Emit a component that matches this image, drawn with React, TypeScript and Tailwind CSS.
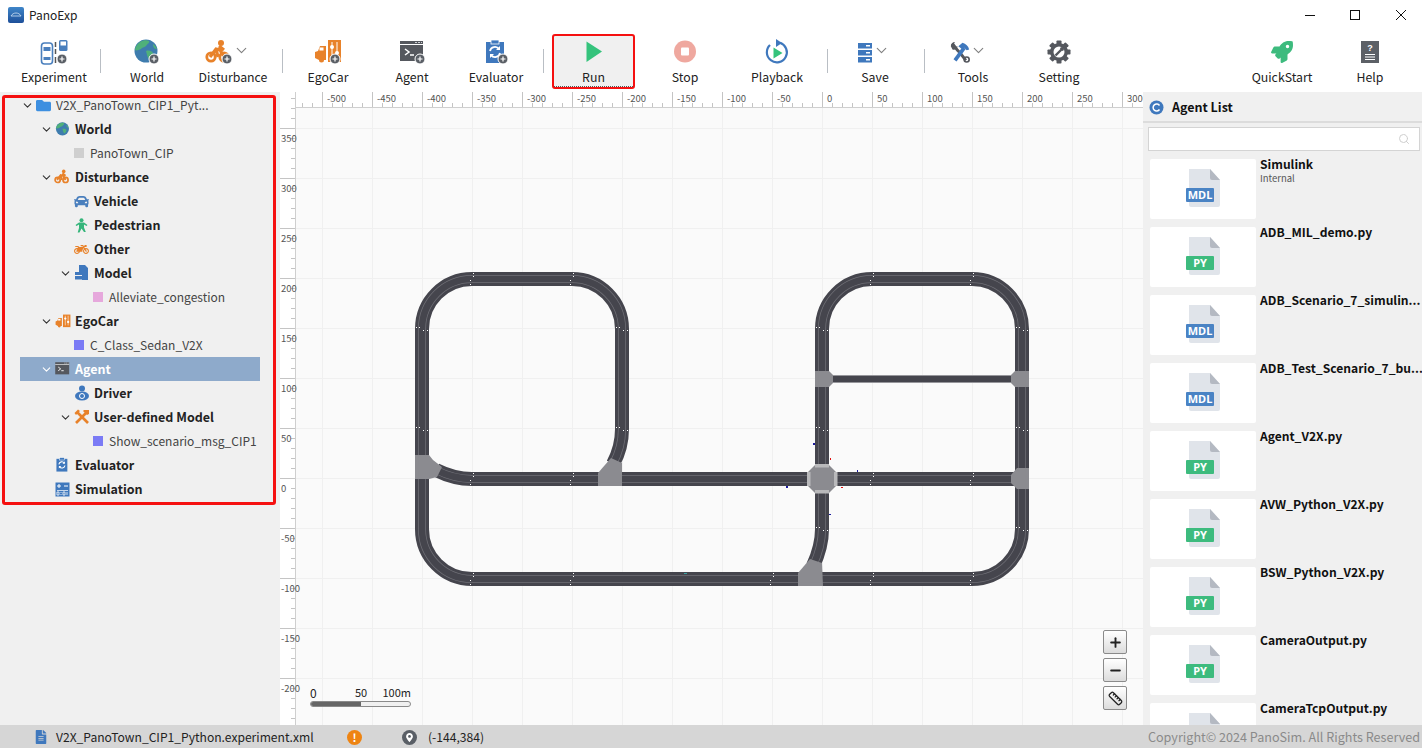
import React from "react";
import { ChevronDown, Search, Plus, Minus, Ruler } from "lucide-react";
import { FaRocket, FaCar, FaMotorcycle, FaFolder, FaFileAlt, FaMapMarkerAlt } from "react-icons/fa";

const Badge = ({ x, y }: { x: number; y: number }) => (
  <g>
    <circle cx={x} cy={y} r={5} fill="#5a5f66" stroke="#fff" strokeWidth={1} />
    <path d={`M${x - 2.5} ${y}H${x + 2.5}M${x} ${y - 2.5}V${y + 2.5}`} stroke="#fff" strokeWidth={1.2} />
  </g>
);

const Sv = ({ w = 28, h = 26, vb = "0 0 28 26", children }: { w?: number; h?: number; vb?: string; children: React.ReactNode }) => (
  <svg width={w} height={h} viewBox={vb} className="shrink-0">{children}</svg>
);

const ExperimentIcon = () => (
  <Sv>
    <rect x="1.5" y="4" width="11" height="21" rx="3" fill="#fff" stroke="#4a7fbd" strokeWidth="1.6" />
    <rect x="3.5" y="8" width="7" height="4" fill="#4a7fbd" />
    <rect x="3.5" y="18" width="7" height="3" fill="#4a7fbd" />
    <path d="M15.5 3v5M15.5 10v5M15.5 18v6" stroke="#555" strokeWidth="1.5" />
    <rect x="19" y="1" width="8.5" height="11" rx="1.5" fill="#4a7fbd" />
    <rect x="20.5" y="2.5" width="5.5" height="4" fill="#fff" />
    <Badge x={22} y={20} />
  </Sv>
);

const WorldIcon = ({ s = 28, badge = true }: { s?: number; badge?: boolean }) => (
  <Sv w={s} h={(s * 26) / 28}>
    <circle cx="13" cy="12" r="11.5" fill="#3e7cae" />
    <path d="M7 3c3-2 7-2 9-1 1 2-2 3-3 5-2 2-4 1-5 3-2 1-5 2-6 1 0-3 2-6 5-8zM13 12c3-1 6 0 7 2 0 3-2 5-4 6-2-2-2-5-3-8zM20 5c2 1 3 3 4 5-2 0-4-1-4-5z" fill="#4fb07a" />
    {badge && <Badge x={21} y={20} />}
  </Sv>
);

const CyclistIcon = ({ s = 28, badge = true }: { s?: number; badge?: boolean }) => (
  <Sv w={s} h={(s * 26) / 28}>
    <circle cx="6" cy="18" r="4.2" fill="none" stroke="#e8822a" strokeWidth="2.8" />
    <circle cx="19" cy="18" r="4.2" fill="none" stroke="#e8822a" strokeWidth="2.8" />
    <circle cx="16" cy="4" r="3" fill="#e8822a" />
    <path d="M5 18l6-8 4 1 4 7M11 10l2 8M14 7l5 4" fill="none" stroke="#e8822a" strokeWidth="3.2" />
    {badge && <Badge x={22} y={20} />}
  </Sv>
);

const EgoIcon = ({ s = 28, badge = true }: { s?: number; badge?: boolean }) => (
  <Sv w={s} h={(s * 26) / 28}>
    <path d="M1 19v-6l3-1 2-5h6v14h-2a2.5 2.5 0 0 1-5 0z" fill="#e8822a" />
    <rect x="5.5" y="8.5" width="4" height="3" fill="#fff" />
    <rect x="14" y="1" width="13" height="22" fill="#e8822a" />
    <path d="M18 3v17M23 3v17" stroke="#fff" strokeWidth="1" />
    <circle cx="18" cy="8" r="2" fill="#fff" />
    <circle cx="23" cy="14" r="2" fill="#fff" />
    {badge && <Badge x={21} y={20} />}
  </Sv>
);

const AgentIcon = ({ s = 28, badge = true }: { s?: number; badge?: boolean }) => (
  <Sv w={s} h={(s * 26) / 28}>
    <rect x="2" y="2" width="23" height="20" fill="#55585e" />
    <rect x="2" y="5" width="23" height="1" fill="#fff" />
    <path d="M17 3.5h2M20 3.5h2M23 3.5h1" stroke="#cfd2d6" strokeWidth="1.2" />
    <path d="M7 10l4 3-4 3M12 16h4" fill="none" stroke="#fff" strokeWidth="1.5" />
    {badge && <Badge x={22} y={20} />}
  </Sv>
);

const EvalIcon = ({ s = 28, badge = true }: { s?: number; badge?: boolean }) => (
  <Sv w={s} h={(s * 26) / 28}>
    <rect x="4" y="3" width="18" height="21" fill="#3f78bd" />
    <rect x="9" y="1" width="8" height="4" fill="#3f78bd" stroke="#fff" strokeWidth="0.8" />
    <path d="M8 12a5 5 0 0 1 9-2M18 14a5 5 0 0 1-9 2" fill="none" stroke="#fff" strokeWidth="1.8" />
    <path d="M18 7v4h-4zM8 19v-4h4z" fill="#fff" />
    {badge && <Badge x={21} y={20} />}
  </Sv>
);

const RunIcon = () => (
  <Sv>
    <path d="M6.500 2.500L22 12.500L6.500 23z" fill="#35c37c" />
  </Sv>
);

const StopIcon = () => (
  <Sv>
    <circle cx="14" cy="12.500" r="11" fill="#efa89f" />
    <rect x="10" y="8.500" width="8" height="8" rx="1" fill="#fff" />
  </Sv>
);

const PlaybackIcon = () => (
  <Sv>
    <path d="M17 3.800A10 10 0 1 1 7 6" fill="none" stroke="#3f78bd" strokeWidth="2.200" />
    <path d="M13 0l6 4-6 4z" fill="#3f78bd" />
    <path d="M10.500 8.500l9 5.500-9 5.500z" fill="#35c37c" />
  </Sv>
);

const SaveIcon = () => (
  <Sv w={16} h={24} vb="0 0 16 24">
    {[3, 10, 17].map((y) => (
      <g key={y}>
        <rect x="1" y={y} width="14" height="5.500" fill="#3f78bd" />
        <rect x="9" y={y + 2} width="4" height="1.500" fill="#fff" />
      </g>
    ))}
  </Sv>
);

const ToolsIcon = () => (
  <Sv w={20} h={24} vb="0 0 24 26">
    <path d="M3 3l6 8 3 3 7 9" fill="none" stroke="#55585e" strokeWidth="3.500" />
    <path d="M1 6c0-3 2-5 5-5L4 4l2 3 3-1c0 3-3 5-6 4z" fill="#55585e" />
    <path d="M6 23L17 8" stroke="#3f78bd" strokeWidth="4.500" />
    <path d="M10 6l5-4c4 1 7 4 8 8l-3 1-3-3-2 2z" fill="#3f78bd" />
    <circle cx="20" cy="22" r="3" fill="none" stroke="#55585e" strokeWidth="2" />
  </Sv>
);

const GearIcon = () => (
  <Sv w={24} h={24} vb="0 0 24 24">
    <g fill="#55585e">
      {[0, 45, 90, 135, 180, 225, 270, 315].map((a) => (
        <rect key={a} x="9.500" y="0.500" width="5" height="5" rx="0.800" transform={`rotate(${a} 12 12)`} />
      ))}
      <circle cx="12" cy="12" r="9" />
    </g>
    <circle cx="12" cy="12" r="5.500" fill="#fff" />
    <path d="M8.500 15.500L14 10" stroke="#55585e" strokeWidth="2.400" />
    <circle cx="15" cy="9" r="2" fill="#55585e" />
  </Sv>
);

const HelpIcon = () => (
  <Sv w={20} h={24} vb="0 0 20 24">
    <rect x="1" y="1" width="18" height="22" fill="#5c6066" />
    <text x="10" y="11" textAnchor="middle" fontSize="9" fontWeight="700" fill="#fff" fontFamily="'Liberation Sans',sans-serif">?</text>
    <path d="M5 14.500h10M5 17h10M5 19.500h10" stroke="#fff" strokeWidth="1.200" />
  </Sv>
);

const SimIcon = () => (
  <Sv w={15} h={15} vb="0 0 15 15">
    <rect x="0.500" y="0.500" width="14" height="14" fill="#3f78bd" />
    <path d="M2 4h4M4 2v4M9 4h4" stroke="#fff" strokeWidth="1" />
    <path d="M2 8.500h11" stroke="#fff" strokeWidth="0.700" />
    <path d="M2 10h2v3H2zM6 10v1M6 12v1M8 10h2v3H8zM12 10v3" fill="none" stroke="#fff" strokeWidth="0.800" />
  </Sv>
);

const ModelIcon = () => (
  <Sv w={15} h={16} vb="0 0 15 16">
    <path d="M5 0h6l3 3v12H8V7H5z" fill="#3f78bd" />
    <rect x="1" y="7" width="10" height="3" fill="#3f78bd" />
    <rect x="1" y="11" width="10" height="3.500" fill="#3f78bd" />
  </Sv>
);

const DriverIcon = () => (
  <Sv w={16} h={16} vb="0 0 16 16">
    <circle cx="8" cy="3.500" r="3" fill="#3f78bd" />
    <ellipse cx="8" cy="11" rx="7" ry="4.500" fill="#3f78bd" />
    <circle cx="8" cy="11" r="2.500" fill="none" stroke="#fff" strokeWidth="1" />
  </Sv>
);

const PedIcon = () => (
  <Sv w={15} h={15} vb="0 0 15 15">
    <circle cx="7.500" cy="2.200" r="2" fill="#35b57a" />
    <path d="M1.500 7l3.500-2.500h5L13.500 7l-1 1-2.500-1.500v3l1.800 4.500h-1.800L7.500 10.500 5.500 14.500H3.700L5 10V6.500L2.500 8z" fill="#35b57a" />
  </Sv>
);

const WrenchCross = () => (
  <Sv w={16} h={16} vb="0 0 16 16">
    <path d="M2 14L12 4" stroke="#e8822a" strokeWidth="2.600" />
    <path d="M10 1h5v4l-2 1-4-4z" fill="#e8822a" />
    <path d="M3 3l11 11" stroke="#e8822a" strokeWidth="2.600" />
    <path d="M0.500 4L4 0.500 6 2 2 6z" fill="#e8822a" />
  </Sv>
);

const Sq = ({ c }: { c: string }) => <span className="block w-[10px] h-[10px] mr-[6px] shrink-0" style={{ background: c }} />;

const I = ({ children }: { children: React.ReactNode }) => (
  <span className="w-[15px] h-[16px] mr-[5px] flex items-center justify-center shrink-0">{children}</span>
);

type TreeRow = { level: number; label: string; bold?: boolean; chev?: boolean; icon: React.ReactNode; sel?: boolean };

const rows: TreeRow[] = [
  { level: 0, label: "V2X_PanoTown_CIP1_Pyt...", chev: true, icon: <I><FaFolder size={15} color="#3d8fe0" /></I> },
  { level: 1, label: "World", bold: true, chev: true, icon: <I><WorldIcon s={16} badge={false} /></I> },
  { level: 2, label: "PanoTown_CIP", icon: <Sq c="#cfcfcf" /> },
  { level: 1, label: "Disturbance", bold: true, chev: true, icon: <I><CyclistIcon s={17} badge={false} /></I> },
  { level: 2, label: "Vehicle", bold: true, icon: <I><FaCar size={15} color="#4a7fbd" /></I> },
  { level: 2, label: "Pedestrian", bold: true, icon: <I><PedIcon /></I> },
  { level: 2, label: "Other", bold: true, icon: <I><FaMotorcycle size={15} color="#e8822a" /></I> },
  { level: 2, label: "Model", bold: true, chev: true, icon: <I><ModelIcon /></I> },
  { level: 3, label: "Alleviate_congestion", icon: <Sq c="#e6a8dc" /> },
  { level: 1, label: "EgoCar", bold: true, chev: true, icon: <I><EgoIcon s={16} badge={false} /></I> },
  { level: 2, label: "C_Class_Sedan_V2X", icon: <Sq c="#7b7bf5" /> },
  { level: 1, label: "Agent", bold: true, chev: true, sel: true, icon: <I><AgentIcon s={17} badge={false} /></I> },
  { level: 2, label: "Driver", bold: true, icon: <I><DriverIcon /></I> },
  { level: 2, label: "User-defined Model", bold: true, chev: true, icon: <I><WrenchCross /></I> },
  { level: 3, label: "Show_scenario_msg_CIP1", icon: <Sq c="#7b7bf5" /> },
  { level: 1, label: "Evaluator", bold: true, icon: <I><EvalIcon s={17} badge={false} /></I> },
  { level: 1, label: "Simulation", bold: true, icon: <I><SimIcon /></I> },
];

const Tree = () => (
  <aside className="relative w-[280px] shrink-0 bg-[#f0f0f0] pt-[1px]">
    {rows.map((r) => (
      <div
        key={r.label}
        className={`ml-[20px] w-[240px] h-[24px] flex items-center whitespace-nowrap ${r.sel ? "bg-[#8eaacb] text-white" : r.bold ? "text-[#222]" : "text-[#444]"} ${r.bold ? "font-bold text-[12.500px]" : "text-[12px]"}`}
        style={{ paddingLeft: 1 + 19 * r.level }}
      >
        <span className="w-[15px] flex items-center justify-start shrink-0">
          {r.chev && <ChevronDown size={13} strokeWidth={2} color={r.sel ? "#fff" : "#333"} />}
        </span>
        {r.icon}
        <span>{r.label}</span>
      </div>
    ))}
    <div className="absolute left-[2px] top-[3px] w-[274px] h-[410px] border-[3px] border-[#f51010] rounded-[3px]" />
  </aside>
);

const Tool = ({ label, icon, w, sel, chev, cls = "", shift = 0 }: { label: string; icon: React.ReactNode; w: number; sel?: boolean; chev?: boolean; cls?: string; shift?: number }) => (
  <div
    className={`h-[55px] flex flex-col items-center shrink-0 ${sel ? "border-2 border-[#f51010] rounded-[3px] bg-[#f0f0f0] pt-[3px]" : "pt-[5px]"} ${cls}`}
    style={{ width: w }}
  >
    <div className="h-[26px] flex items-center justify-center" style={{ transform: `translateX(${shift}px)` }}>
      {icon}
      {chev && <ChevronDown size={17} strokeWidth={1.600} color="#808080" className="-mt-[3px]" />}
    </div>
    <div className={`mt-[3px] h-[18px] leading-[18px] text-[12.300px] text-[#222] ${sel ? "border-b border-dotted border-[#555] w-full text-center h-[20px]" : ""}`}>{label}</div>
  </div>
);

const Sep = ({ ml = 0 }: { ml?: number }) => <div className="w-px h-[24px] bg-[#b9bec4] mt-[15px] shrink-0" style={{ marginLeft: ml }} />;

const Toolbar = () => (
  <div className="h-[62px] flex items-start pt-[4px] pl-[14px] bg-white shrink-0">
    <Tool label="Experiment" w={80} icon={<ExperimentIcon />} />
    <Sep ml={6} />
    <Tool label="World" w={92} icon={<WorldIcon />} />
    <Tool label="Disturbance" w={80} chev shift={-6} icon={<CyclistIcon />} />
    <Sep ml={9} />
    <Tool label="EgoCar" w={90} icon={<EgoIcon />} />
    <Tool label="Agent" w={78} icon={<AgentIcon />} />
    <Tool label="Evaluator" w={90} icon={<EvalIcon />} />
    <Sep ml={2} />
    <Tool label="Run" w={83} sel cls="ml-[8px]" icon={<RunIcon />} />
    <Tool label="Stop" w={100} icon={<StopIcon />} />
    <Tool label="Playback" w={84} icon={<PlaybackIcon />} />
    <Sep ml={8} />
    <Tool label="Save" w={94} chev shift={-2} icon={<SaveIcon />} />
    <Sep ml={2} />
    <Tool label="Tools" w={96} chev shift={-5} icon={<ToolsIcon />} />
    <Tool label="Setting" w={76} icon={<GearIcon />} />
    <div className="flex-1" />
    <Tool label="QuickStart" w={80} icon={<FaRocket size={22} color="#3dbb7e" />} />
    <Tool label="Help" w={96} cls="mr-[4px]" icon={<HelpIcon />} />
  </div>
);

const range = (a: number, b: number, s: number) => {
  const o: number[] = [];
  for (let v = a; v <= b; v += s) o.push(v);
  return o;
};
const X0 = 822;
const Y0 = 478;

const dotsH: [number, number][] = [];
[[279, [472, 572, 872, 972]], [479, [472, 572, 872, 972]], [579, [472, 572, 872, 972, 772]]].forEach(([y, xs]) => {
  (xs as number[]).forEach((x) => dotsH.push([x, y as number]));
});
const dotsV: [number, number][] = [];
[[422, [329, 429]], [622, [329, 429]], [822, [329, 429, 529]], [1022, [329, 429, 529]]].forEach(([x, ys]) => {
  (ys as number[]).forEach((y) => dotsV.push([x as number, y]));
});

const MAIN_ROADS = [
  "M422 460V329A50 50 0 0 1 472 279H572A50 50 0 0 1 622 329V429C622 442 619 453 613 464",
  "M422 475V529A50 50 0 0 0 472 579H972A50 50 0 0 0 1022 529V329A50 50 0 0 0 972 279H872A50 50 0 0 0 822 329V529C822 542 819 553 813 566",
  "M436 470C448 476 458 479 472 479H1022",
];

const Poly = ({ p, c = "#8b8b90" }: { p: string; c?: string }) => <polygon points={p} fill={c} />;

const MapSvg = () => (
  <svg width={863} height={633} viewBox="280 92 863 633" className="absolute inset-0">
    <rect x="280" y="92" width="863" height="633" fill="#fafafa" />
    {range(-500, 300, 50).map((v) => (
      <path key={v} d={`M${X0 + v + 0.5} 107V725`} stroke="#f0f0f0" strokeWidth="1" />
    ))}
    {range(-200, 350, 50).map((v) => (
      <path key={v} d={`M295 ${Y0 - v + 0.5}H1143`} stroke="#f0f0f0" strokeWidth="1" />
    ))}

    <g fill="none">
      {MAIN_ROADS.map((d) => <path key={d} d={d} stroke="#45454d" strokeWidth="14" />)}
      {MAIN_ROADS.map((d) => <path key={d} d={d} stroke="#6f6f76" strokeWidth="8" />)}
      {MAIN_ROADS.map((d) => <path key={d} d={d} stroke="#45454d" strokeWidth="6.500" />)}
      <path d="M822 379H1022" stroke="#96969b" strokeWidth="8" />
      <path d="M822 379H1022" stroke="#45454d" strokeWidth="6" />
    </g>

    <Poly p="415,455 429,455 433,460 442,467 437,477 429,479 415,479" />
    <Poly p="598,473 611,458 622,463 622,486 598,486" />
    <Poly p="810,559 822,563 823,586 798,586 798,573" />
    <Poly p="815,371 829,371 833,375 833,383 829,387 815,387" />
    <Poly p="1015,371 1029,371 1029,387 1015,387 1011,383 1011,375" />
    <Poly p="1017,468 1029,468 1029,489 1017,489 1011,483 1011,475" />
    <Poly p="815,465 829,465 836,472 836,486 829,493 815,493 808,486 808,472" />
    <g fill="#b9b9bb">
      <rect x="807" y="472" width="3.500" height="14" />
      <rect x="834" y="472" width="3.500" height="14" />
      <rect x="815" y="464" width="14" height="3.500" />
      <rect x="815" y="490" width="14" height="3.500" />
    </g>

    <g fill="#fff">
      {dotsH.map(([x, y]) => (
        <g key={`${x}-${y}`}>
          <rect x={x + 1} y={y - 6} width="1" height="1" />
          <rect x={x + 1} y={y - 3} width="1" height="1" />
          <rect x={x - 2} y={y + 1} width="1" height="1" />
          <rect x={x - 2} y={y + 5} width="1" height="1" />
        </g>
      ))}
      {dotsV.map(([x, y]) => (
        <g key={`${x}-${y}`}>
          <rect x={x - 6} y={y - 2} width="1" height="1" />
          <rect x={x - 3} y={y - 2} width="1" height="1" />
          <rect x={x + 1} y={y + 1} width="1" height="1" />
          <rect x={x + 5} y={y + 1} width="1" height="1" />
        </g>
      ))}
    </g>
    <rect x="813" y="443" width="2" height="2" fill="#1a1a9e" />
    <rect x="830" y="458" width="1" height="2" fill="#e01010" />
    <rect x="857" y="470" width="1" height="2" fill="#1a1a9e" />
    <rect x="786" y="486" width="2" height="2" fill="#1a1a9e" />
    <rect x="841" y="487" width="2" height="1" fill="#e01010" />
    <rect x="829" y="514" width="2" height="1" fill="#1a1a9e" />
    <rect x="684" y="573" width="3" height="1" fill="#3aa0a0" />

    <rect x="280" y="92" width="863" height="15" fill="#fff" />
    <rect x="280" y="92" width="15" height="633" fill="#fff" />
    <path d="M295 107.500H1143" stroke="#cfcfcf" />
    <path d="M295.500 92V725" stroke="#cfcfcf" />
    {range(-520, 310, 10).map((v) => (
      <path key={v} d={`M${X0 + v + 0.5} ${v % 50 === 0 ? 92 : 103}V107`} stroke="#c4c4c4" />
    ))}
    {range(-240, 380, 10).map((v) => (
      <path key={v} d={`M${v % 50 === 0 ? 280 : 291} ${Y0 - v + 0.5}H295`} stroke="#c4c4c4" />
    ))}
    <g fontSize="9.500" fill="#555" fontFamily="'Noto Sans CJK SC','Noto Sans',sans-serif">
      {range(-500, 300, 50).map((v) => (
        <text key={v} x={X0 + v + 5} y="102">{v}</text>
      ))}
      {range(-200, 350, 50).map((v) => (
        <text key={v} x="281" y={Y0 - v + 14}>{v}</text>
      ))}
    </g>
  </svg>
);

const ZoomBtn = ({ children }: { children: React.ReactNode }) => (
  <div className="w-[24px] h-[24px] rounded-[2px] border border-[#8a8a8a] bg-gradient-to-b from-white to-[#dcdcdc] flex items-center justify-center text-[#222]">{children}</div>
);

const Canvas = () => (
  <section className="relative flex-1 overflow-hidden">
    <MapSvg />
    <div className="absolute left-[823px] top-[538px] flex flex-col gap-[4px]">
      <ZoomBtn><Plus size={15} strokeWidth={3} /></ZoomBtn>
      <ZoomBtn><Minus size={15} strokeWidth={3} /></ZoomBtn>
      <ZoomBtn><Ruler size={15} strokeWidth={2} /></ZoomBtn>
    </div>
    <div className="absolute left-[30px] top-[592px] w-[101px]">
      <div className="relative h-[17px] text-[11px] text-[#222] leading-[17px]">
        <span className="absolute left-0 text-[12px]">0</span>
        <span className="absolute left-[45px]">50</span>
        <span className="absolute right-0">100m</span>
      </div>
      <div className="h-[6px] flex border border-[#8a8a8a] rounded-full overflow-hidden bg-[#f0f0f0]">
        <div className="w-1/2 bg-[#666]" />
      </div>
    </div>
  </section>
);

const FileIcon = ({ kind }: { kind: string }) => (
  <svg width="34" height="40" viewBox="0 0 34 40">
    <path d="M3 1h21l10 11v25a2 2 0 0 1-2 2H5a2 2 0 0 1-2-2z" fill="#e0e4ea" />
    <path d="M24 1l10 11h-8a2 2 0 0 1-2-2z" fill="#b4b9c2" />
    <rect x="0" y="20" width="28" height="14" rx="1" fill={kind === "MDL" ? "#4a83c4" : "#3dbb7e"} />
    <text x="14" y="31" textAnchor="middle" fontSize="11" fontWeight="700" fill="#fff" fontFamily="'Noto Sans',sans-serif">{kind}</text>
  </svg>
);

const agents: { name: string; kind: string; sub?: string }[] = [
  { name: "Simulink", kind: "MDL", sub: "Internal" },
  { name: "ADB_MIL_demo.py", kind: "PY" },
  { name: "ADB_Scenario_7_simulin...", kind: "MDL" },
  { name: "ADB_Test_Scenario_7_bu...", kind: "MDL" },
  { name: "Agent_V2X.py", kind: "PY" },
  { name: "AVW_Python_V2X.py", kind: "PY" },
  { name: "BSW_Python_V2X.py", kind: "PY" },
  { name: "CameraOutput.py", kind: "PY" },
  { name: "CameraTcpOutput.py", kind: "PY" },
];

const AgentPanel = () => (
  <aside className="w-[279px] shrink-0 bg-[#f0f0f0] flex flex-col overflow-hidden">
    <div className="h-[31px] shrink-0 border-b-2 border-[#dcdcdc] flex items-center pl-[6px] pt-[1px] gap-[8px]">
      <svg width="15" height="15" viewBox="0 0 15 15">
        <circle cx="7.500" cy="7.500" r="7" fill="#3f78bd" />
        <path d="M10.500 5.500a3.500 3.500 0 1 0 0 4" fill="none" stroke="#fff" strokeWidth="1.500" />
      </svg>
      <span className="font-bold text-[12.500px] text-[#111]">Agent List</span>
    </div>
    <div className="mt-[4px] ml-[5px] w-[272px] h-[24px] shrink-0 bg-white border border-[#d4d4d4] flex items-center justify-end pr-[9px]">
      <Search size={12} color="#cfcfcf" />
    </div>
    <div className="mt-[8px] ml-[7px] flex flex-col gap-[8px]">
      {agents.map((a) => (
        <div key={a.name} className="flex h-[60px] shrink-0">
          <div className="w-[106px] h-[60px] bg-white rounded-[2px] shrink-0 flex items-center justify-center pb-[2px]">
            <FileIcon kind={a.kind} />
          </div>
          <div className="ml-[4px] whitespace-nowrap">
            <div className="font-bold text-[12.100px] text-[#111] leading-[14px] -mt-[2px]">{a.name}</div>
            {a.sub && <div className="text-[9.500px] text-[#555] leading-[15px]">{a.sub}</div>}
          </div>
        </div>
      ))}
    </div>
  </aside>
);

export default function App() {
  return (
    <div className="w-[1422px] h-[748px] overflow-hidden flex flex-col bg-white text-[12.100px]" style={{ fontFamily: "'Noto Sans CJK SC','Noto Sans',sans-serif" }}>
      <header className="h-[30px] shrink-0 flex items-center pl-[8px]">
        <svg width="16" height="16" viewBox="0 0 16 16">
          <defs>
            <linearGradient id="lg" x1="0" y1="0" x2="0" y2="1">
              <stop offset="0" stopColor="#3f86c9" />
              <stop offset="1" stopColor="#1d4f99" />
            </linearGradient>
          </defs>
          <rect width="16" height="16" rx="2" fill="url(#lg)" />
          <path d="M3 9c1-2 3-3 5-3s4 1 5 3z" fill="none" stroke="#cfe2f5" strokeWidth="0.800" />
        </svg>
        <span className="ml-[5px] -mt-[1px] text-[12px] text-[#222]">PanoExp</span>
        <div className="flex-1" />
        <svg width="112" height="14" viewBox="0 0 112 14" className="mr-[5px]">
          <path d="M0 7.500H10" stroke="#111" strokeWidth="1" />
          <rect x="45.500" y="2.500" width="9" height="9" fill="none" stroke="#111" strokeWidth="1" />
          <path d="M91 2L101 12M101 2L91 12" stroke="#111" strokeWidth="1" />
        </svg>
      </header>
      <Toolbar />
      <main className="flex-1 flex min-h-0">
        <Tree />
        <Canvas />
        <AgentPanel />
      </main>
      <footer className="h-[23px] shrink-0 bg-[#d6d6d6] flex items-center text-[#222] pr-[2px] pt-[1px]">
        <FaFileAlt size={14} color="#3f78bd" className="ml-[34px]" />
        <span className="ml-[8px] w-[291px] shrink-0">V2X_PanoTown_CIP1_Python.experiment.xml</span>
        <span className="w-[15px] h-[15px] rounded-full bg-[#ee8412] text-white text-[11px] font-bold flex items-center justify-center">!</span>
        <span className="ml-[40px] w-[15px] h-[15px] rounded-full bg-[#5a5f66] flex items-center justify-center">
          <FaMapMarkerAlt size={9} color="#fff" />
        </span>
        <span className="ml-[11px]">(-144,384)</span>
        <div className="flex-1" />
        <span className="text-[#8a8a8a] text-[12.600px]">Copyright© 2024 PanoSim. All Rights Reserved</span>
      </footer>
    </div>
  );
}
